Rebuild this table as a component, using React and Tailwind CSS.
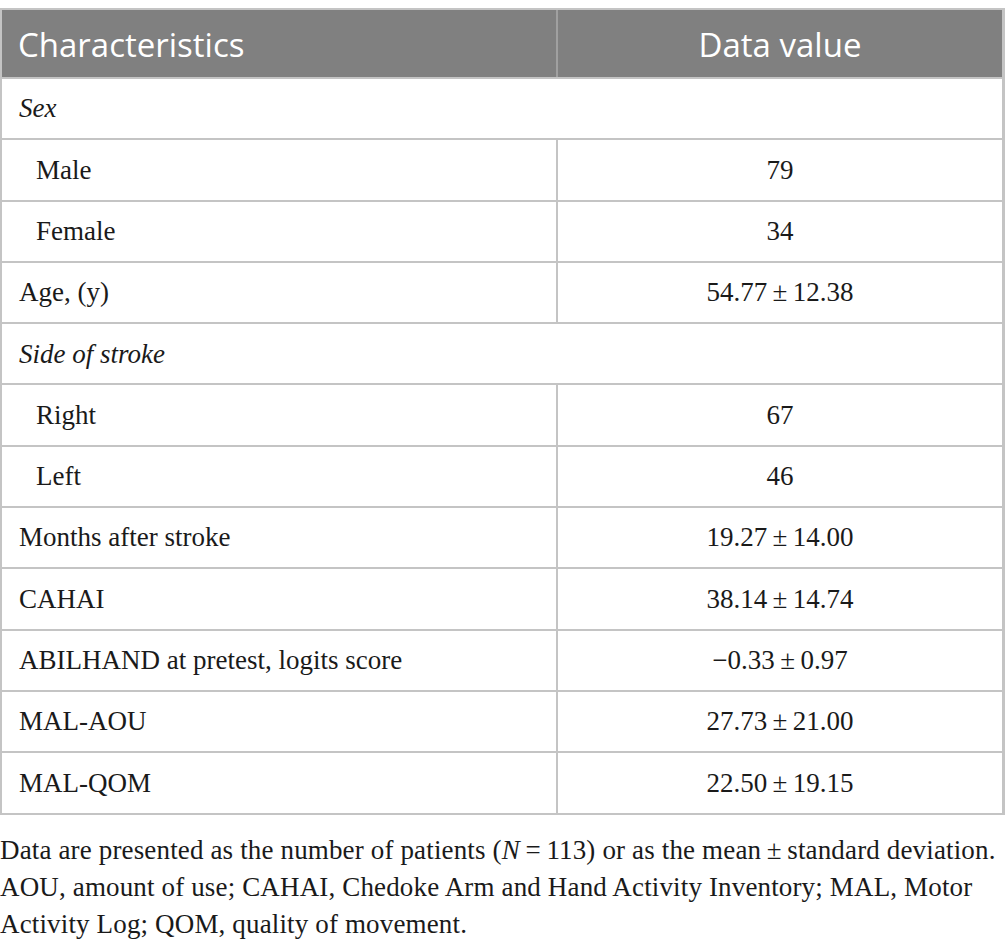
import React from 'react';

const rows = [
  { label: 'Sex', section: true },
  { label: 'Male', value: '79', indent: true },
  { label: 'Female', value: '34', indent: true },
  { label: 'Age, (y)', value: '54.77\u2009±\u200912.38' },
  { label: 'Side of stroke', section: true },
  { label: 'Right', value: '67', indent: true },
  { label: 'Left', value: '46', indent: true },
  { label: 'Months after stroke', value: '19.27\u2009±\u200914.00' },
  { label: 'CAHAI', value: '38.14\u2009±\u200914.74' },
  { label: 'ABILHAND at pretest, logits score', value: '\u22120.33\u2009±\u20090.97' },
  { label: 'MAL-AOU', value: '27.73\u2009±\u200921.00' },
  { label: 'MAL-QOM', value: '22.50\u2009±\u200919.15' },
];

const serif = { fontFamily: '"Liberation Serif", "DejaVu Serif", serif' };

export default function App() {
  return (
    <div className="w-[1005px] bg-white pt-[8px]">
      <div className="border-2 border-[#c4c4c4] border-r-[3px]">
        <div className="grid grid-cols-[556px_1fr] h-[67px] bg-[#808080] text-white text-[33px] font-['Open_Sans',sans-serif]">
          <div className="flex items-center pt-[2px] pl-[16px] border-r-2 border-[#a0a0a0]">Characteristics</div>
          <div className="flex items-center pt-[2px] justify-center">Data value</div>
        </div>
        {rows.map((r) =>
          r.section ? (
            <div key={r.label} className="h-[61.3px] flex items-center pl-[17px] border-t-2 border-[#c4c4c4] text-[27px] italic text-[#1a1a1a]" style={serif}>
              {r.label}
            </div>
          ) : (
            <div key={r.label} className="grid grid-cols-[556px_1fr] h-[61.3px] border-t-2 border-[#c4c4c4] text-[27px] text-[#1a1a1a]" style={serif}>
              <div className={`flex items-center border-r-2 border-[#c4c4c4] ${r.indent ? 'pl-[34px]' : 'pl-[17px]'}`}>{r.label}</div>
              <div className="flex items-center justify-center">{r.value}</div>
            </div>
          )
        )}
      </div>
      <div className="pt-[17px] text-[27px] leading-[37px] text-[#1a1a1a] whitespace-nowrap tracking-[0.15px]" style={serif}>
        <p>Data are presented as the number of patients (<i>N</i>{'\u2009'}={'\u2009'}113) or as the mean{'\u2009'}±{'\u2009'}standard deviation.</p>
        <p>AOU, amount of use; CAHAI, Chedoke Arm and Hand Activity Inventory; MAL, Motor</p>
        <p>Activity Log; QOM, quality of movement.</p>
      </div>
    </div>
  );
}
